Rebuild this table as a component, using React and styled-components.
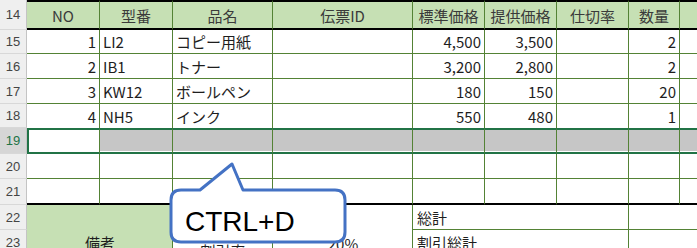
import React from 'react';
import styled, { createGlobalStyle } from 'styled-components';

const GlobalStyle = createGlobalStyle`
  body {
    margin: 0;
    background: #fff;
    overflow: hidden;
  }
`;

const Frame = styled.div`
  position: relative;
  width: 697px;
  height: 248px;
  overflow: hidden;
`;

const Sheet = styled.div`
  display: grid;
  grid-template-columns: 27px 73px 73px 100px 140px 72px 72px 72px 51px 40px;
  grid-template-rows: 30px 24px 25px 25px 24px 26px 25px 26px 25px 25px 25px;
  font-family: "Noto Sans CJK JP", sans-serif;
  font-size: 15px;
  color: #1e1e1e;
`;

const RowHead = styled.div`
  box-sizing: border-box;
  display: flex;
  align-items: center;
  justify-content: center;
  background: ${p => (p.$active ? '#d6d6d6' : '#efefef')};
  color: ${p => (p.$active ? '#217346' : '#444')};
  border-right: 1px solid #c4c4c4;
  border-bottom: 1px solid #d8d8d8;
  font-family: "Liberation Sans", Arial, sans-serif;
  font-size: 13px;
`;

const justify = { left: 'flex-start', right: 'flex-end', center: 'center' };

const Cell = styled.div`
  box-sizing: border-box;
  display: flex;
  align-items: center;
  justify-content: ${p => justify[p.$align || 'left']};
  padding: 0 3px;
  white-space: nowrap;
  overflow: hidden;
  line-height: 1;
  background: #fff;
  border-right: 1px solid #548235;
  border-bottom: ${p => (p.$noBottom ? 'none' : '1px solid #548235')};
`;

const HeadCell = styled(Cell)`
  background: #c6e0b4;
  color: #3a3a3a;
  border-top: 2px solid #000;
  border-bottom: 2px solid #000;
  justify-content: center;
`;

const SelCell = styled(Cell)`
  background: ${p => (p.$first ? '#fff' : '#c6c6c6')};
  border-top: 2px solid #217346;
  border-bottom: 2px solid #217346;
  border-left: ${p => (p.$first ? '2px solid #217346' : 'none')};
  box-shadow: inset 0 -1px 0 #fff;
`;

const EndCell = styled(Cell)`
  border-bottom: 2px solid #000;
`;

const FootCell = styled(Cell)`
  grid-column: ${p => p.$col};
  grid-row: ${p => p.$row};
  background: ${p => p.$bg || '#fff'};
  justify-content: ${p => justify[p.$align || 'left']};
  padding-left: 4px;
  padding-top: ${p => p.$drop || 0}px;
`;

const Callout = styled.div`
  position: absolute;
  left: 160px;
  top: 150px;
  width: 200px;
  height: 100px;
`;

const Bubble = styled.svg`
  position: absolute;
  left: 0;
  top: 0;
`;

const Keys = styled.div`
  position: absolute;
  left: 25px;
  top: 58px;
  font-family: "Liberation Sans", Arial, sans-serif;
  font-size: 28px;
  line-height: 28px;
  color: #000;
`;

const headers = ['NO', '型番', '品名', '伝票ID', '標準価格', '提供価格', '仕切率', '数量', ''];

const items = [
  { no: 1, code: 'LI2', name: 'コピー用紙', list: '4,500', offer: '3,500', qty: 2 },
  { no: 2, code: 'IB1', name: 'トナー', list: '3,200', offer: '2,800', qty: 2 },
  { no: 3, code: 'KW12', name: 'ボールペン', list: '180', offer: '150', qty: 20 },
  { no: 4, code: 'NH5', name: 'インク', list: '550', offer: '480', qty: 1 },
];

const blanks = Array.from({ length: 9 });

const App = () => {
  return (
    <Frame>
      <GlobalStyle />
      <Sheet>
        <RowHead>14</RowHead>
        {headers.map((h, i) => (
          <HeadCell key={i}>{h}</HeadCell>
        ))}

        {items.map((it, r) => {
          const last = r === items.length - 1;
          return (
            <React.Fragment key={it.no}>
              <RowHead>{15 + r}</RowHead>
              <Cell $align="right" $noBottom={last}>{it.no}</Cell>
              <Cell $noBottom={last}>{it.code}</Cell>
              <Cell $noBottom={last}>{it.name}</Cell>
              <Cell $noBottom={last}></Cell>
              <Cell $align="right" $noBottom={last}>{it.list}</Cell>
              <Cell $align="right" $noBottom={last}>{it.offer}</Cell>
              <Cell $noBottom={last}></Cell>
              <Cell $align="right" $noBottom={last}>{it.qty}</Cell>
              <Cell $noBottom={last}></Cell>
            </React.Fragment>
          );
        })}

        <RowHead $active>19</RowHead>
        {blanks.map((_, i) => (
          <SelCell key={i} $first={i === 0} />
        ))}

        <RowHead>20</RowHead>
        {blanks.map((_, i) => (
          <Cell key={i} />
        ))}

        <RowHead>21</RowHead>
        {blanks.map((_, i) => (
          <EndCell key={i} />
        ))}

        <RowHead>22</RowHead>
        <RowHead>23</RowHead>
        <RowHead>24</RowHead>
        <FootCell $col="2 / 4" $row="9 / 12" $bg="#c6e0b4" $align="center">備考</FootCell>
        <FootCell $col="4 / 5" $row="9 / 12" $align="center" $drop={16}>割引率</FootCell>
        <FootCell $col="5 / 6" $row="9 / 12" $align="center" $drop={2}>20%</FootCell>
        <FootCell $col="6 / 9" $row="9 / 10">総計</FootCell>
        <FootCell $col="9 / 11" $row="9 / 10" />
        <FootCell $col="6 / 9" $row="10 / 11">割引総計</FootCell>
        <FootCell $col="9 / 11" $row="10 / 11" />
        <FootCell $col="6 / 9" $row="11 / 12" />
        <FootCell $col="9 / 11" $row="11 / 12" />
      </Sheet>

      <Callout>
        <Bubble width="200" height="100" viewBox="0 0 200 100">
          <path
            d="M 21 40 L 40 40 L 72 14 L 83 40 L 175 40 Q 185 40 185 50 L 185 82 Q 185 92 175 92 L 21 92 Q 11 92 11 82 L 11 50 Q 11 40 21 40 Z"
            fill="#fff"
            stroke="#4472c4"
            strokeWidth="3"
            strokeLinejoin="round"
          />
        </Bubble>
        <Keys>CTRL+D</Keys>
      </Callout>
    </Frame>
  );
};

export default App;
